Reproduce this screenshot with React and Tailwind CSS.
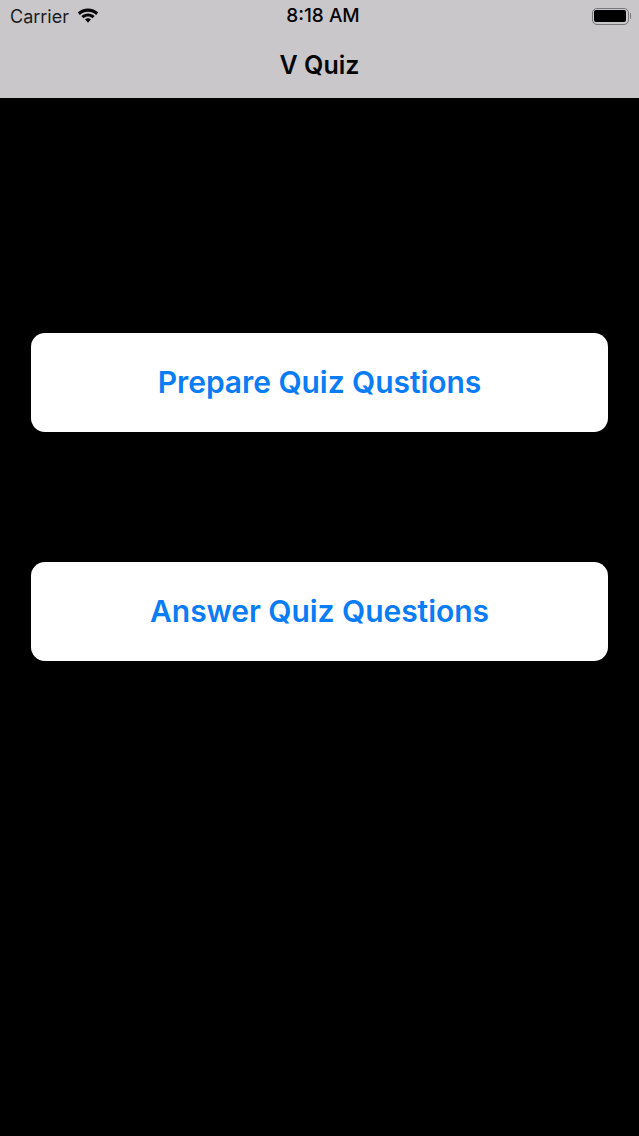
import React from "react";

function WifiIcon() {
  return (
    <svg width="22" height="16" viewBox="0 0 22 16" fill="#050505">
      <path d="M11 0.5C7 0.5 3.6 2 0.8 4.5L2.9 6.9C5.1 4.9 7.9 3.7 11 3.7C14.1 3.7 16.9 4.9 19.1 6.9L21.2 4.5C18.4 2 15 0.5 11 0.5Z" />
      <path d="M11 5.4C8.5 5.4 6.2 6.3 4.4 7.9L6.4 10.2C7.7 9.1 9.3 8.5 11 8.5C12.7 8.5 14.3 9.1 15.6 10.2L17.6 7.9C15.8 6.3 13.5 5.4 11 5.4Z" />
      <path d="M11 10.2C9.9 10.2 8.8 10.6 8 11.3L11 14.8L14 11.3C13.2 10.6 12.1 10.2 11 10.2Z" />
    </svg>
  );
}

function BatteryIcon() {
  return (
    <div className="flex items-center gap-[1px]">
      <div className="w-[37px] h-[17px] rounded-[5px] border-[1.5px] border-[#77767a] p-[1.5px]">
        <div className="w-full h-full rounded-[2px] bg-black" />
      </div>
      <div className="w-[1.5px] h-[6px] rounded-r-sm bg-[#77767a]" />
    </div>
  );
}

function MenuButton({ label }) {
  return (
    <button
      type="button"
      className="w-full h-[98.5px] rounded-[14px] bg-white text-[#0a7cf5] text-[30px] font-semibold tracking-[-0.05px]"
    >
      {label}
    </button>
  );
}

export default function App() {
  return (
    <div className="w-[639px] h-[1136px] flex flex-col bg-black font-['Inter',sans-serif] overflow-hidden">
      <header className="h-[98px] shrink-0 flex flex-col bg-[#c9c7ca] text-[#050505]">
        <div className="h-[32px] grid grid-cols-3 items-center pl-[10px] pr-[8px]">
          <div className="flex items-center gap-[8px]">
            <span className="text-[18px] font-normal text-[#1c1c1e]">Carrier</span>
            <WifiIcon />
          </div>
          <span className="text-center text-[19px] font-medium whitespace-nowrap pl-[5px] pt-[1px]">8:18 AM</span>
          <div className="flex justify-end">
            <BatteryIcon />
          </div>
        </div>
        <h1 className="text-center text-[25px] font-semibold leading-[30px] mt-[18px]">V Quiz</h1>
      </header>
      <main className="flex flex-col gap-[130.5px] pt-[235px] pl-[31px] pr-[31px]">
        <MenuButton label="Prepare Quiz Qustions" />
        <MenuButton label="Answer Quiz Questions" />
      </main>
    </div>
  );
}
